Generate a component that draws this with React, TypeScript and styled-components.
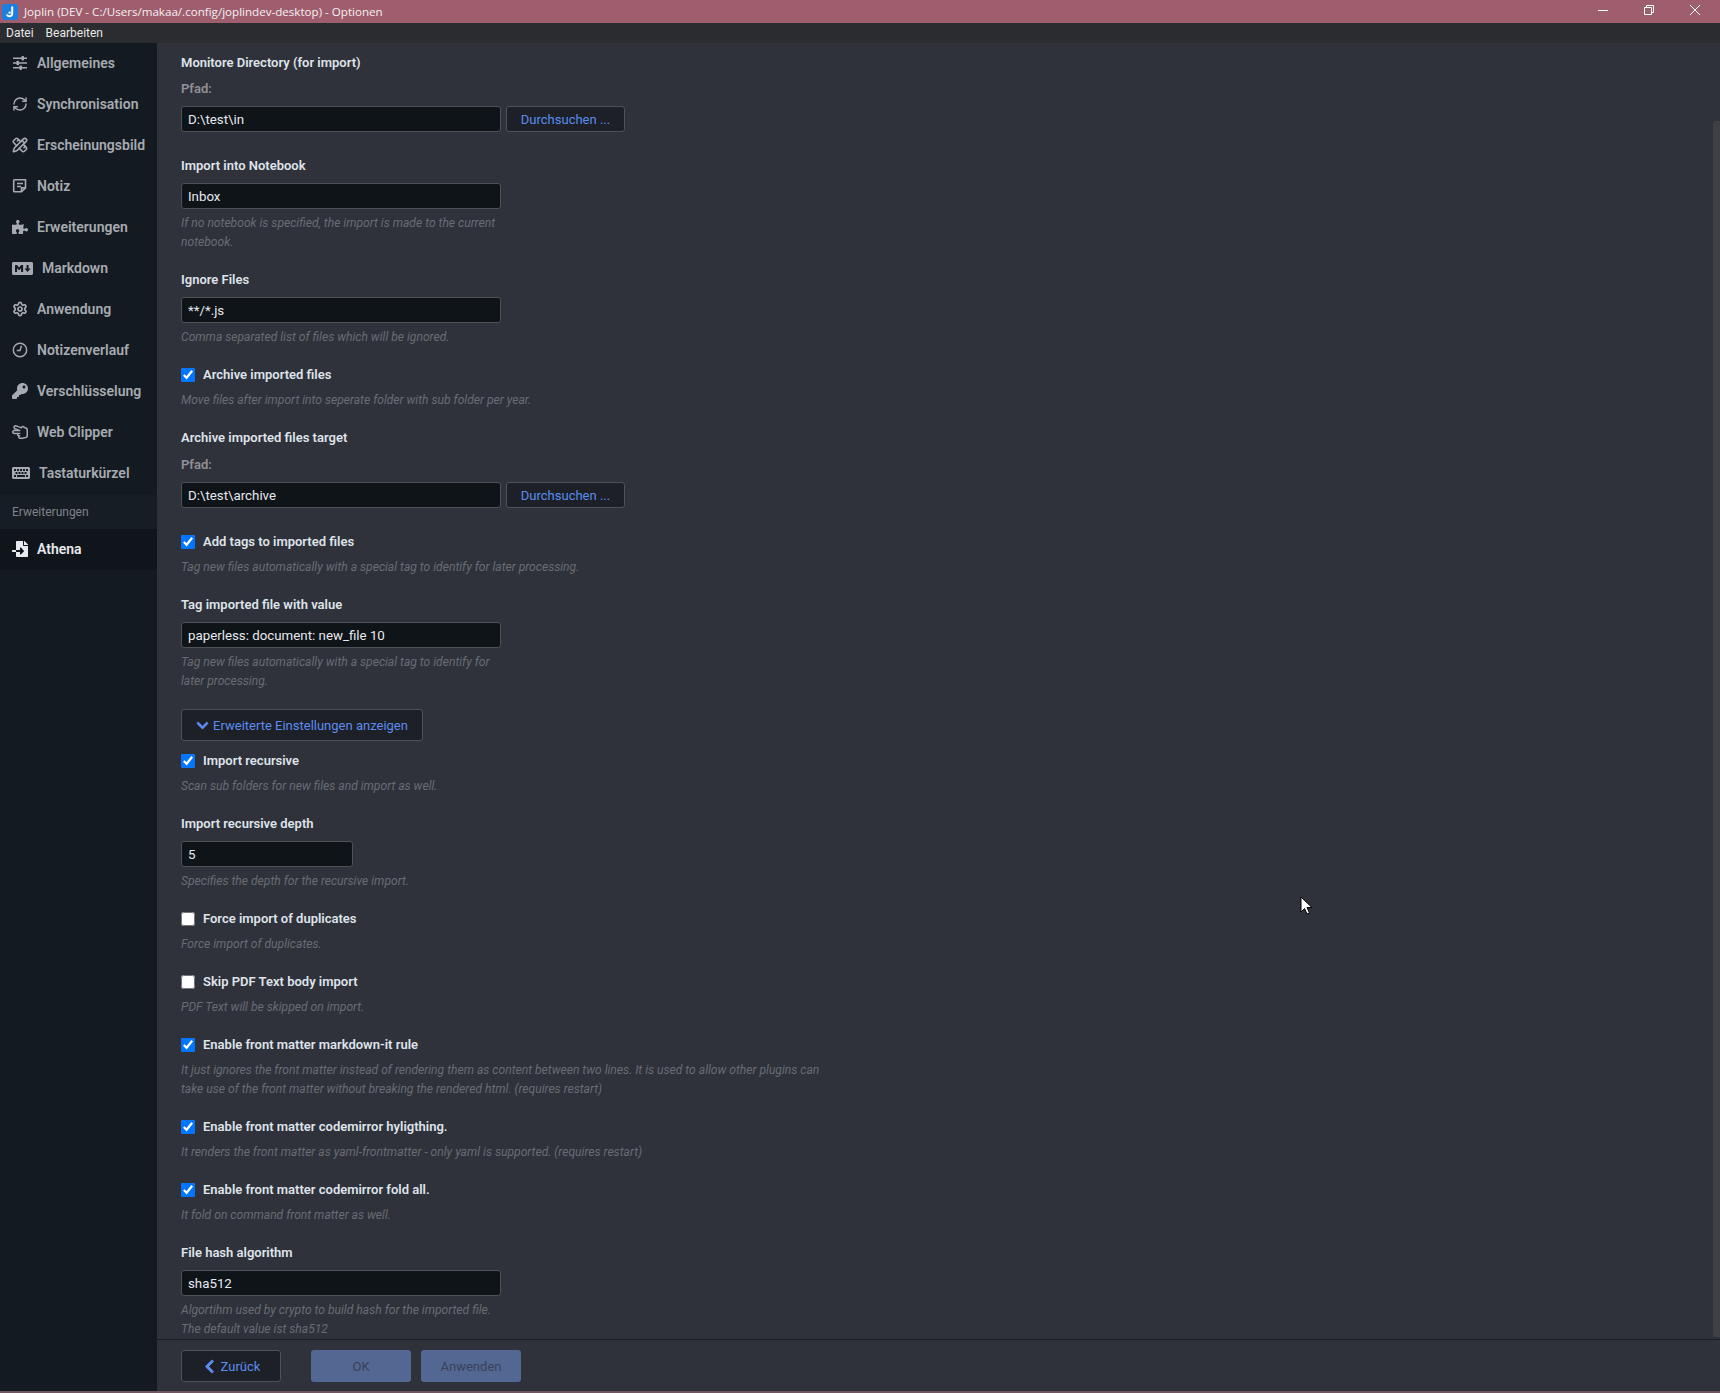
import React from "react";
import type { ReactNode } from "react";
import styled, { createGlobalStyle } from "styled-components";
import { FaChevronDown, FaChevronLeft, FaFileImport, FaKey, FaKeyboard, FaMarkdown, FaPuzzlePiece, FaRegHandScissors } from "react-icons/fa";
import { PencilRuler, RefreshCw, Settings } from "lucide-react";

const Global = createGlobalStyle`
  html, body { margin: 0; height: 100%; background: #2f323b; }
  * { box-sizing: border-box; }
`;

const Window = styled.div`
  display: flex;
  flex-direction: column;
  height: 1393px;
  overflow: hidden;
  border-bottom: 2px solid #6f5560;
  font-family: Roboto, sans-serif;
`;

const TitleBar = styled.div`
  display: flex;
  align-items: center;
  flex: 0 0 23px;
  background: #9f5e6d;
  color: #f4f0f1;
  font: 11.6px "Open Sans", sans-serif;
`;

const Logo = styled.svg`
  width: 16px;
  height: 16px;
  margin: 0 6px 0 2px;
`;

const TitleText = styled.span`
  flex: 1;
`;

const WinButton = styled.svg`
  width: 46px;
  height: 23px;
  color: #fff;
`;

const MenuBar = styled.div`
  display: flex;
  align-items: center;
  gap: 12px;
  flex: 0 0 20px;
  padding-left: 6px;
  background: #2b2c2f;
  color: #e8e8e8;
  font: 12px Roboto, sans-serif;
`;

const Body = styled.div`
  display: flex;
  flex: 1;
  min-height: 0;
`;

const Sidebar = styled.nav`
  flex: 0 0 157px;
  background: #141a21;
`;

const NavItem = styled.div<{ $active?: boolean }>`
  display: flex;
  align-items: center;
  gap: 9px;
  height: 41px;
  padding: 0 0 1px 12px;
  background: ${(p) => (p.$active ? "#10151b" : "transparent")};
  color: ${(p) => (p.$active ? "#e8eaee" : "#a7abb1")};
  font-size: 14px;
  font-weight: 600;
  white-space: nowrap;
`;

const NavHeader = styled.div`
  display: flex;
  align-items: center;
  height: 34px;
  margin-top: 1px;
  padding-left: 12px;
  background: #171d25;
  color: #7f8389;
  font-size: 12px;
`;

const NavIcon = styled.svg`
  flex: none;
  width: 16px;
  height: 16px;
`;

const Main = styled.div`
  position: relative;
  display: flex;
  flex-direction: column;
  flex: 1;
  min-width: 0;
  background: #2f323b;
`;

const Scroll = styled.div`
  flex: 1;
  min-height: 0;
  overflow: hidden;
  padding: 10px 0 0 24px;
`;

const ScrollThumb = styled.div`
  position: absolute;
  top: 78px;
  right: 0;
  bottom: 54px;
  width: 7px;
  border-radius: 3px 0 0 3px;
  background: #3e4046;
`;

const Section = styled.div<{ $gap?: number }>`
  margin-bottom: ${(p) => p.$gap ?? 18}px;
`;

const Title = styled.div`
  height: 19px;
  margin-bottom: 8px;
  color: #dfe3ea;
  font-size: 13px;
  font-weight: 600;
  line-height: 19px;
`;

const PathLabel = styled.div<{ $top?: number }>`
  height: 19px;
  margin: ${(p) => p.$top ?? -1}px 0 8px;
  color: #8f9196;
  font-size: 13px;
  font-weight: 600;
  line-height: 19px;
`;

const Row = styled.div`
  display: flex;
  gap: 5px;
`;

const Input = styled.input<{ $short?: boolean }>`
  display: block;
  width: ${(p) => (p.$short ? 172 : 320)}px;
  height: 26px;
  padding: 0 6px;
  border: 1px solid #4f5158;
  border-radius: 3px;
  outline: none;
  background: #0f1418;
  color: #e6e9ef;
  font: 13.3px Roboto, sans-serif;
`;

const Button = styled.div<{ $width?: number; $height?: number }>`
  display: flex;
  align-items: center;
  justify-content: center;
  gap: 4px;
  width: ${(p) => p.$width ?? 119}px;
  height: ${(p) => p.$height ?? 26}px;
  border: 1px solid #4f5158;
  border-radius: 3px;
  background: #1d2026;
  color: #5b8cf0;
  font-size: 13px;
`;

const PrimaryButton = styled(Button)`
  border: none;
  background: #526792;
  color: #3a4258;
`;

const Desc = styled.div<{ $width?: number }>`
  width: ${(p) => p.$width ?? 320}px;
  margin-top: 5px;
  color: #696c73;
  font-size: 12.1px;
  font-style: italic;
  line-height: 19px;
`;

const CheckRow = styled.label`
  display: flex;
  align-items: center;
  gap: 8px;
  height: 19px;
  color: #dfe3ea;
  font-size: 13px;
  font-weight: 600;
`;

const Check = styled.input`
  width: 14px;
  height: 14px;
  margin: 0;
`;

const CheckDesc = styled(Desc)`
  margin-top: 7px;
`;

const ExpandSection = styled.div`
  margin: 18px 0 10px;
`;

const Footer = styled.div`
  display: flex;
  align-items: center;
  flex: 0 0 52px;
  padding: 1px 0 0 24px;
  border-top: 1px solid #1a1d22;
`;

const FooterGap = styled.div<{ $width: number }>`
  flex: 0 0 ${(p) => p.$width}px;
`;

const Cursor = styled.svg`
  position: absolute;
  top: 853px;
  left: 1143px;
  width: 12px;
  height: 19px;
`;

const SlidersIcon = () => (
  <NavIcon viewBox="0 0 16 16" fill="currentColor">
    <path d="M1 2.5h14v1.5H1zM1 7.3h14v1.5H1zM1 12h14v1.5H1z" />
    <rect x="9.5" y="1" width="2.5" height="4.5" rx="0.8" />
    <rect x="4.5" y="5.8" width="2.5" height="4.5" rx="0.8" />
    <rect x="7.5" y="10.5" width="2.5" height="4.5" rx="0.8" />
  </NavIcon>
);

const NoteIcon = () => (
  <NavIcon viewBox="0 0 16 16" fill="none" stroke="currentColor" strokeWidth="1.6">
    <path d="M2.5 1.8h11v8l-4 4h-7a.8.8 0 0 1-.8-.8V2.6a.8.8 0 0 1 .8-.8zM5 5.5h6M5 8.5h4M9.5 13.5v-3.7h4" />
  </NavIcon>
);

const ClockIcon = () => (
  <NavIcon viewBox="0 0 16 16" fill="none" stroke="currentColor" strokeWidth="1.4">
    <circle cx="8" cy="8" r="6.7" />
    <path d="M9.5 3.8 8 8.5H4.8" />
  </NavIcon>
);

const GearIcon = () => <Settings size={16} strokeWidth={2.6} />;

const nav: [ReactNode, string][] = [
  [<SlidersIcon />, "Allgemeines"],
  [<RefreshCw size={16} strokeWidth={2.2} />, "Synchronisation"],
  [<PencilRuler size={16} strokeWidth={2.4} />, "Erscheinungsbild"],
  [<NoteIcon />, "Notiz"],
  [<FaPuzzlePiece size={16} />, "Erweiterungen"],
  [<FaMarkdown size={21} />, "Markdown"],
  [<GearIcon />, "Anwendung"],
  [<ClockIcon />, "Notizenverlauf"],
  [<FaKey size={16} />, "Verschlüsselung"],
  [<FaRegHandScissors size={16} />, "Web Clipper"],
  [<FaKeyboard size={18} />, "Tastaturkürzel"],
];

const Field = ({ title, value, desc, short }: { title: string; value: string; desc?: ReactNode; short?: boolean }) => (
  <Section>
    <Title>{title}</Title>
    <Input readOnly value={value} $short={short} />
    {desc && <Desc>{desc}</Desc>}
  </Section>
);

const PathField = ({ title, value, labelTop }: { title: string; value: string; labelTop?: number }) => (
  <Section $gap={24}>
    <Title>{title}</Title>
    <PathLabel $top={labelTop}>Pfad:</PathLabel>
    <Row>
      <Input readOnly value={value} />
      <Button>Durchsuchen ...</Button>
    </Row>
  </Section>
);

const Toggle = ({ label, desc, off, width }: { label: string; desc: ReactNode; off?: boolean; width?: number }) => (
  <Section>
    <CheckRow>
      <Check type="checkbox" defaultChecked={!off} />
      {label}
    </CheckRow>
    <CheckDesc $width={width}>{desc}</CheckDesc>
  </Section>
);

export default function App() {
  return (
    <Window>
      <Global />
      <TitleBar>
        <Logo viewBox="0 0 16 16">
          <rect width="16" height="16" rx="3" fill="#1a7fe0" />
          <path d="M10.2 2.5v7a2.8 2.8 0 0 1-5.4 1" fill="none" stroke="#fff" strokeWidth="2" />
          <circle cx="7.6" cy="8.6" r="1.2" fill="#fff" />
        </Logo>
        <TitleText>Joplin (DEV - C:/Users/makaa/.config/joplindev-desktop) - Optionen</TitleText>
        <WinButton viewBox="0 0 46 23">
          <path d="M16 10.5h10" stroke="currentColor" fill="none" />
        </WinButton>
        <WinButton viewBox="0 0 46 23">
          <path d="M16.5 7.5h7v7h-7zM18.5 7V5.5h7v7H24" stroke="currentColor" fill="none" />
        </WinButton>
        <WinButton viewBox="0 0 46 23">
          <path d="M16 5l10 10M26 5L16 15" stroke="currentColor" fill="none" />
        </WinButton>
      </TitleBar>
      <MenuBar>
        <span>Datei</span>
        <span>Bearbeiten</span>
      </MenuBar>
      <Body>
        <Sidebar>
          {nav.map(([icon, label]) => (
            <NavItem key={label}>
              {icon}
              {label}
            </NavItem>
          ))}
          <NavHeader>Erweiterungen</NavHeader>
          <NavItem $active>
            <FaFileImport size={16} />
            Athena
          </NavItem>
        </Sidebar>
        <Main>
          <Scroll>
            <PathField title="Monitore Directory (for import)" value="D:\test\in" />
            <Field
              title="Import into Notebook"
              value="Inbox"
              desc="If no notebook is specified, the import is made to the current notebook."
            />
            <Field title="Ignore Files" value="**/*.js" desc="Comma separated list of files which will be ignored." />
            <Toggle
              label="Archive imported files"
              desc="Move files after import into seperate folder with sub folder per year."
              width={500}
            />
            <PathField title="Archive imported files target" value="D:\test\archive" labelTop={0} />
            <Toggle
              label="Add tags to imported files"
              desc="Tag new files automatically with a special tag to identify for later processing."
              width={500}
            />
            <Field
              title="Tag imported file with value"
              value="paperless: document: new_file 10"
              desc="Tag new files automatically with a special tag to identify for later processing."
            />
            <ExpandSection>
              <Button $width={242} $height={32}>
                <FaChevronDown size={13} stroke="currentColor" strokeWidth={30} />
                Erweiterte Einstellungen anzeigen
              </Button>
            </ExpandSection>
            <Toggle label="Import recursive" desc="Scan sub folders for new files and import as well." width={500} />
            <Field title="Import recursive depth" value="5" short desc="Specifies the depth for the recursive import." />
            <Toggle label="Force import of duplicates" desc="Force import of duplicates." off />
            <Toggle label="Skip PDF Text body import" desc="PDF Text will be skipped on import." off />
            <Toggle
              label="Enable front matter markdown-it rule"
              desc={
                <>
                  It just ignores the front matter instead of rendering them as content between two lines. It is used to allow other plugins can
                  <br />
                  take use of the front matter without breaking the rendered html. (requires restart)
                </>
              }
              width={700}
            />
            <Toggle
              label="Enable front matter codemirror hyligthing."
              desc="It renders the front matter as yaml-frontmatter - only yaml is supported. (requires restart)"
              width={700}
            />
            <Toggle label="Enable front matter codemirror fold all." desc="It fold on command front matter as well." />
            <Field
              title="File hash algorithm"
              value="sha512"
              desc={
                <>
                  Algortihm used by crypto to build hash for the imported file.
                  <br />
                  The default value ist sha512
                </>
              }
            />
          </Scroll>
          <ScrollThumb />
          <Footer>
            <Button $width={100} $height={32}>
              <FaChevronLeft size={15} stroke="currentColor" strokeWidth={30} />
              Zurück
            </Button>
            <FooterGap $width={30} />
            <PrimaryButton $width={100} $height={32}>OK</PrimaryButton>
            <FooterGap $width={10} />
            <PrimaryButton $width={100} $height={32}>Anwenden</PrimaryButton>
          </Footer>
          <Cursor viewBox="0 0 12 19">
            <path d="M1 1v15l3.5-3.5 2.5 5.5 2.5-1-2.5-5.5h5z" fill="#fff" stroke="#000" />
          </Cursor>
        </Main>
      </Body>
    </Window>
  );
}
